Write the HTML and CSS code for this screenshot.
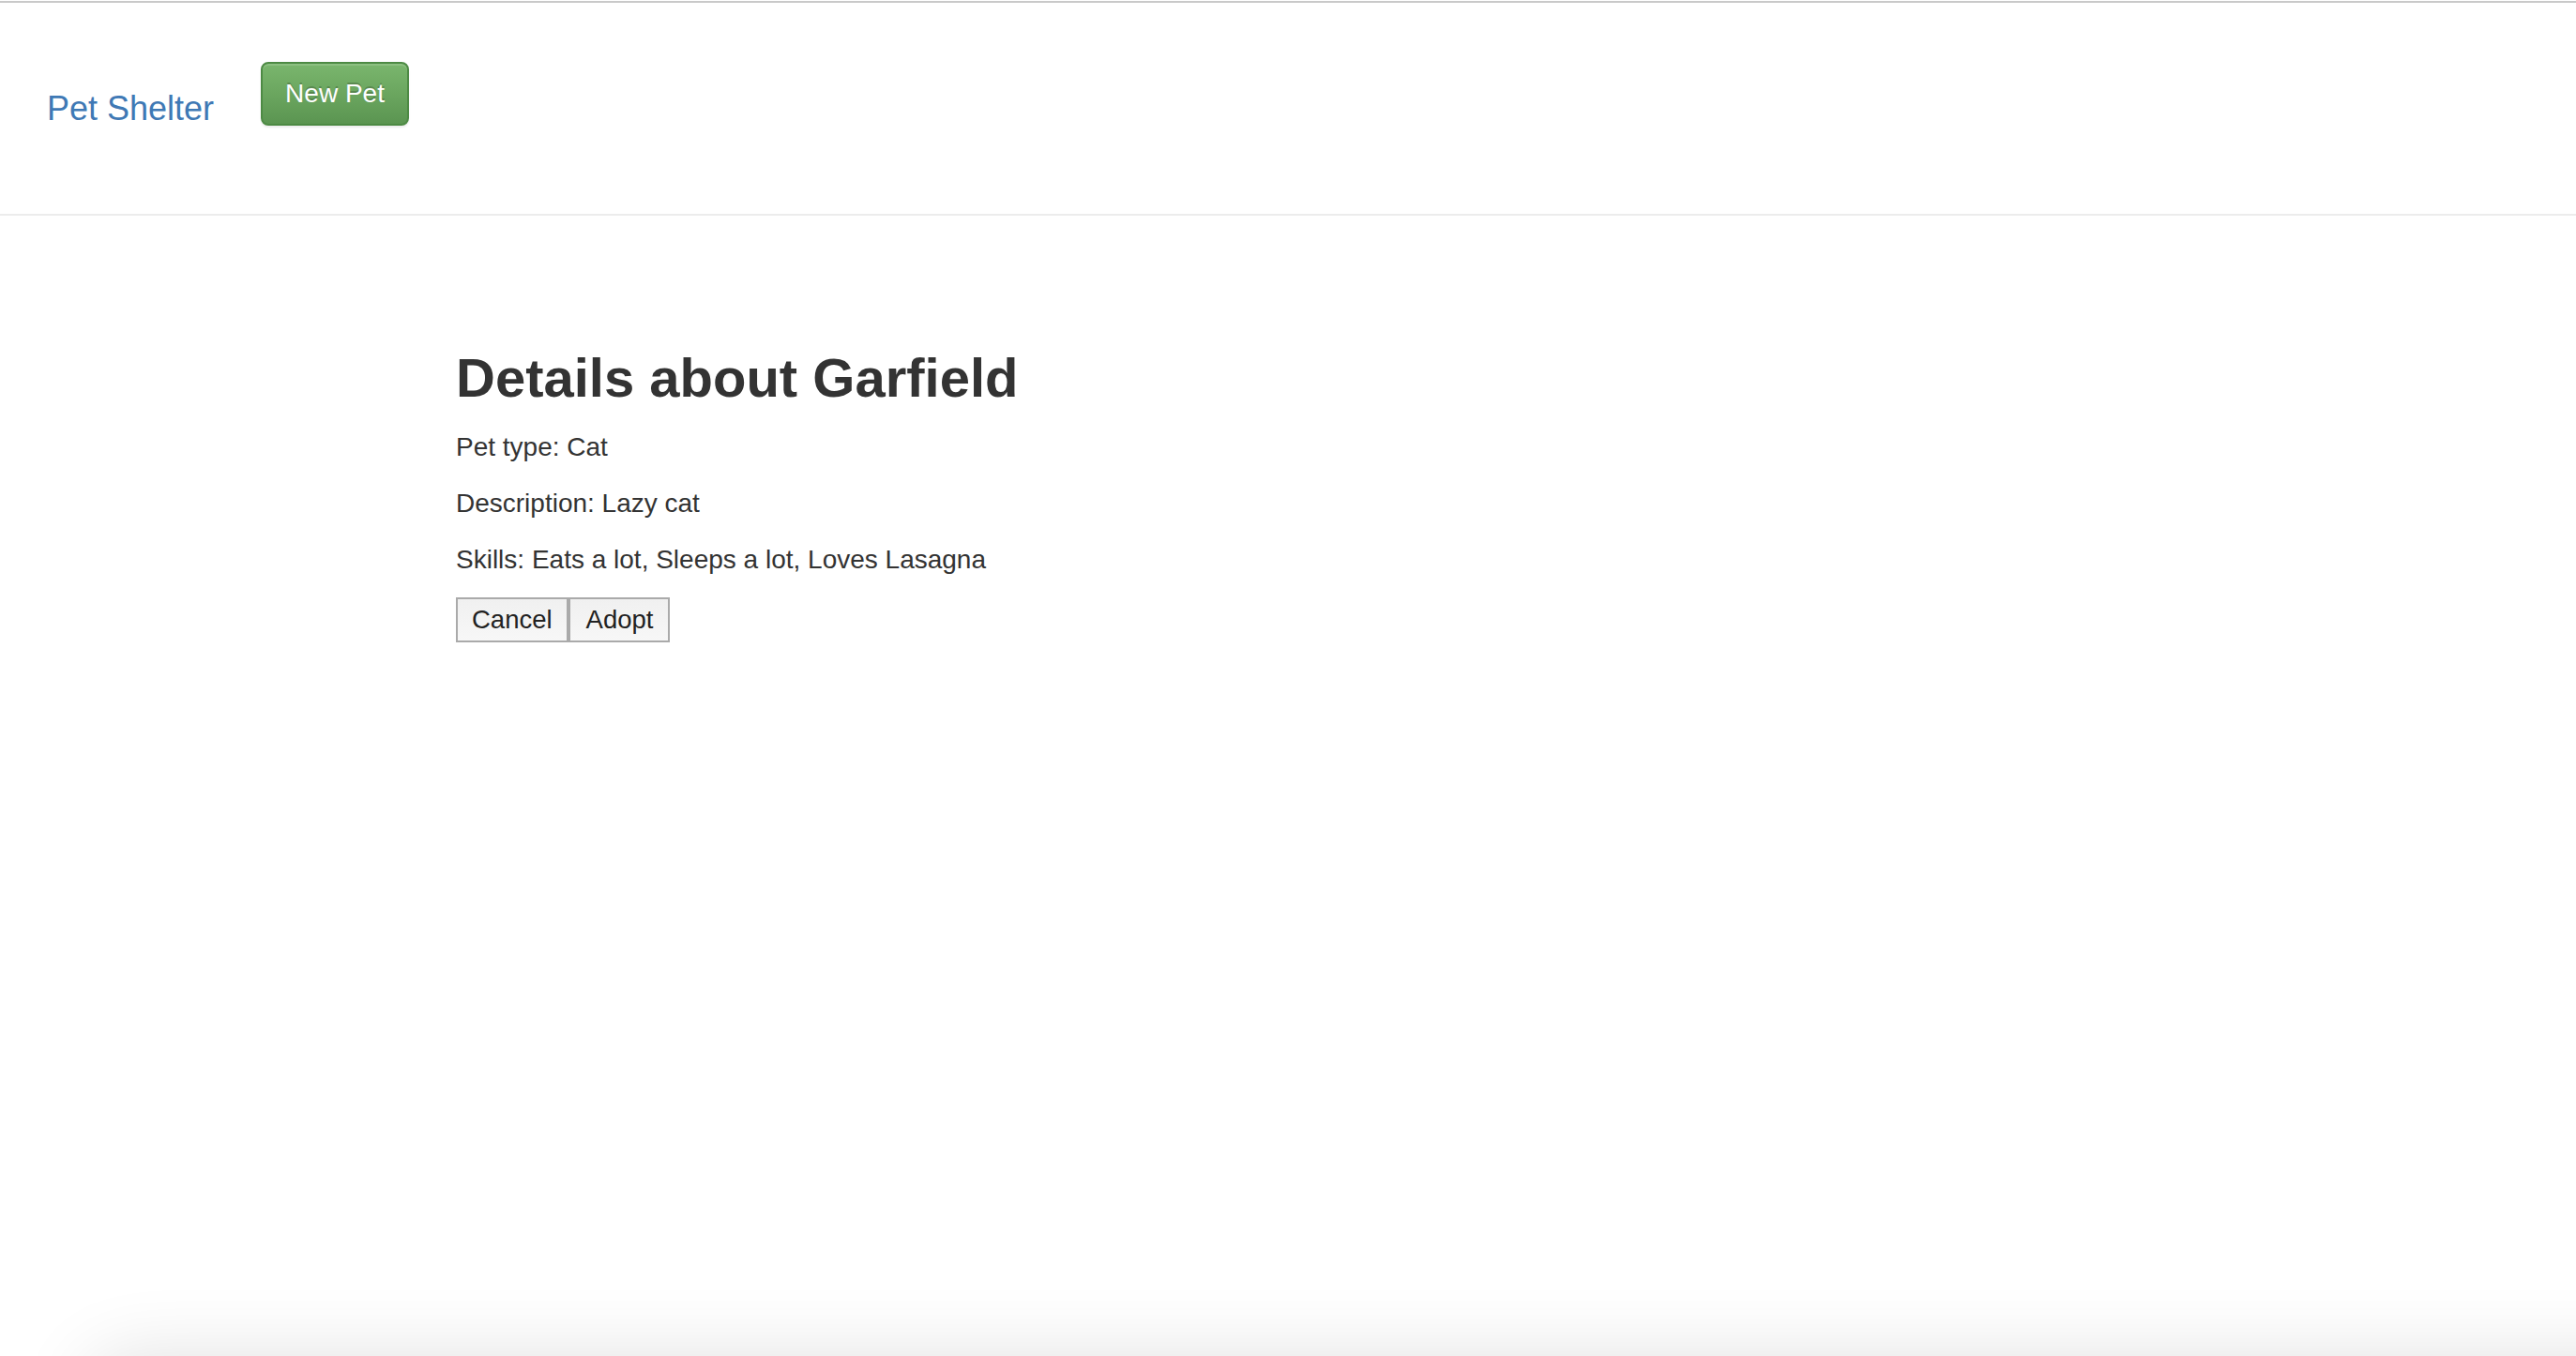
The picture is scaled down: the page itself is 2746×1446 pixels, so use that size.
FILE: index.html
```html
<!DOCTYPE html>
<html lang="en">
<head>
<meta charset="utf-8">
<title>Pet Shelter</title>
<link rel="stylesheet" href="styles.css">
</head>
<body>
<div class="window">
  <header class="navbar">
    <a class="brand" href="#">Pet Shelter</a>
    <button class="btn-success" type="button">New Pet</button>
  </header>
  <main class="content">
    <h2 class="title">Details about Garfield</h2>
    <p class="line">Pet type: Cat</p>
    <p class="line">Description: Lazy cat</p>
    <p class="line">Skills: Eats a lot, Sleeps a lot, Loves Lasagna</p>
    <div class="actions">
      <button class="plain" type="button">Cancel</button>
      <button class="plain" type="button">Adopt</button>
    </div>
  </main>
</div>
<div class="shade"></div>
</body>
</html>
```

FILE: styles.css
```css
html, body {
  margin: 0;
  padding: 0;
  background: #fff;
  height: 100%;
  overflow: hidden;
}
body {
  font-family: "Liberation Sans", Helvetica, Arial, sans-serif;
  font-size: 28px;
  line-height: 40px;
  color: #333;
}
.window {
  border-top: 2px solid #c9c9c9;
  margin-top: 1px;
}
.navbar {
  display: flex;
  align-items: flex-start;
  gap: 50px;
  padding-left: 50px;
  border-bottom: 2px solid #ececec;
  box-sizing: border-box;
  height: 227px;
}
.brand {
  margin-top: 93px;
  font-size: 36px;
  line-height: 40px;
  color: #3f79b5;
  text-decoration: none;
}
.btn-success {
  margin-top: 63px;
  font-family: inherit;
  font-size: 28px;
  line-height: 40px;
  padding: 12px 24px;
  color: #fff;
  border: 2px solid #4d8a44;
  border-radius: 8px;
  background: linear-gradient(to bottom, #7ab66d 0%, #5b9551 100%);
  text-shadow: 0 -2px 0 rgba(0, 0, 0, 0.2);
  box-shadow: inset 0 2px 0 rgba(255, 255, 255, 0.15), 0 2px 2px rgba(0, 0, 0, 0.075);
  cursor: pointer;
}
.content {
  padding: 141px 0 0 486px;
}
.title {
  margin: 0 0 22px;
  font-size: 58px;
  line-height: 64px;
  font-weight: bold;
  color: #333;
}
.line {
  margin: 0 0 20px;
}
.actions {
  display: flex;
  margin-top: 2px;
}
.plain {
  font-family: "Liberation Sans", Helvetica, Arial, sans-serif;
  font-size: 27.5px;
  line-height: 30px;
  height: 48px;
  padding: 0 15px;
  color: #222;
  border: 2px solid #aaaaaa;
  border-radius: 0;
  background: linear-gradient(to bottom, #f0f0f0 0%, #f7f7f7 100%);
  margin: 0;
}
.plain + .plain {
  padding: 0 16px 0 17px;
}
.shade {
  position: fixed;
  left: 90px;
  right: -200px;
  bottom: -100px;
  height: 100px;
  border-radius: 60px;
  box-shadow: 0 0 80px rgba(0, 0, 0, 0.12);
  pointer-events: none;
}
```
